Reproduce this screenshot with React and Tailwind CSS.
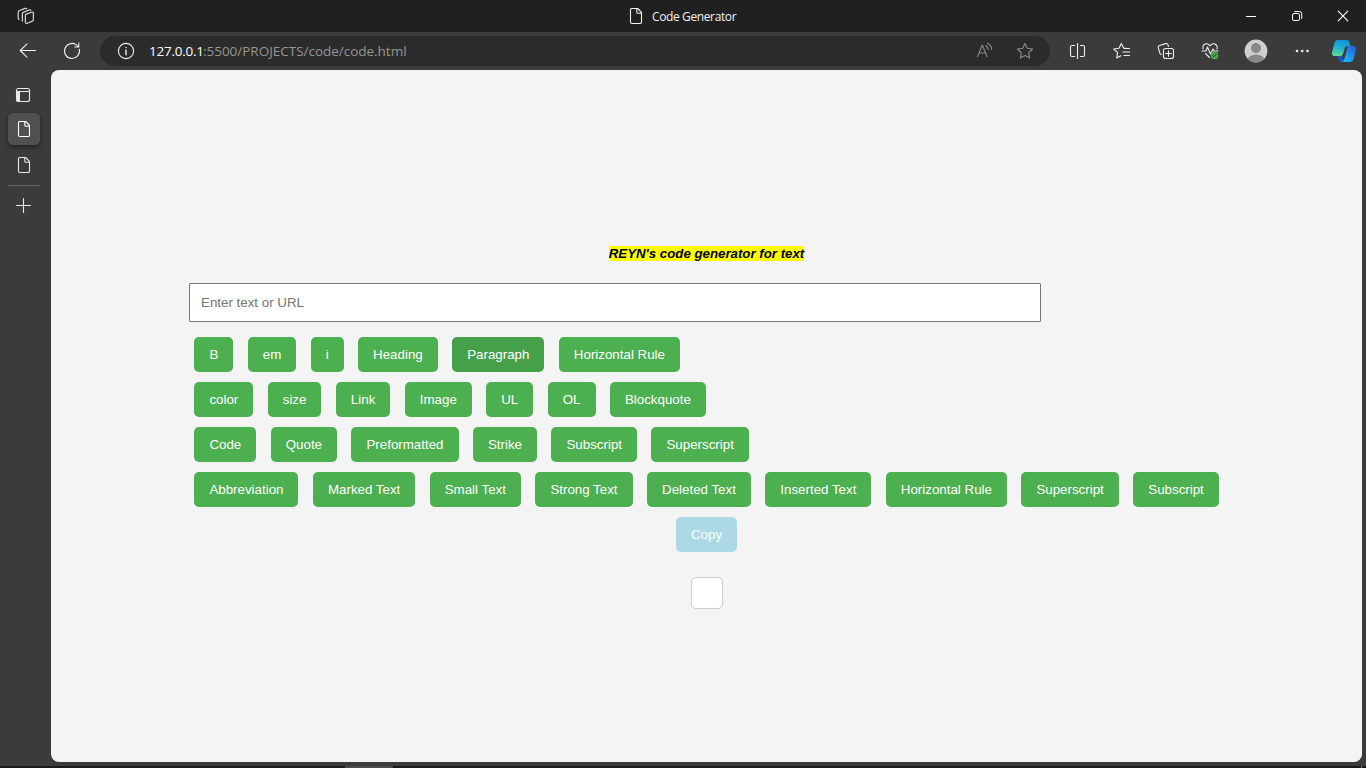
import React from "react";

function Icon({ size = 16, className = "", children, sw = 1.1 }) {
  return (
    <svg
      width={size}
      height={size}
      viewBox={`0 0 ${size} ${size}`}
      fill="none"
      stroke="currentColor"
      strokeWidth={sw}
      strokeLinecap="round"
      strokeLinejoin="round"
      className={`block shrink-0 ${className}`}
    >
      {children}
    </svg>
  );
}

function PageIcon({ className = "" }) {
  return (
    <Icon size={18} className={className} sw={1.1}>
      <path d="M4.5 1.5h6.2l3.8 4v9.600a1.400 1.400 0 0 1-1.400 1.400H4.900a1.400 1.400 0 0 1-1.400-1.400V2.500a1 1 0 0 1 1-1Z" />
      <path d="M9.800 1.700v3.600a1 1 0 0 0 1 1h3.600" />
    </Icon>
  );
}

function Workspaces() {
  return (
    <Icon size={18} className="ml-[17px] text-[#d5d5d5]" sw={1.2}>
      <path d="M8.700 7.400 14.500 5.300q1.900-.6 1.900 1v6.400q0 1-1 1.400l-5 2.100q-2 .7-2-1V8.400q0-.7.3-1Z" />
      <path d="M5.400 14.200V6.500q0-.8.8-1.100l6-2.400q1.300-.4 1.700.5" />
      <path d="M2 12.600q-.8-.5-.8-1.300V4.900q0-.9.8-1.200L8 1.400q1.200-.4 1.800.4" />
    </Icon>
  );
}

function TitleBar() {
  return (
    <header className="flex h-8 shrink-0 items-center bg-[#202020] text-[#f2f2f2]">
      <div className="flex w-[627px] items-center">
        <Workspaces />
      </div>
      <PageIcon />
      <span className="ml-[7px] mt-px w-[100px] whitespace-nowrap font-['Open_Sans',sans-serif] text-[12px] leading-4 tracking-[-0.38px]">
        Code Generator
      </span>
      <div className="ml-auto flex text-white">
        <span className="flex w-[46px] justify-center">
          <Icon size={12} sw={1}><path d="M1 6.500h10" strokeLinecap="butt" /></Icon>
        </span>
        <span className="flex w-[46px] justify-center">
          <Icon size={12} sw={1}>
            <rect x="1.500" y="3.500" width="7" height="7" rx="1.400" />
            <path d="M3.700 1.500h5a2 2 0 0 1 2 2v5" />
          </Icon>
        </span>
        <span className="flex w-[46px] justify-center">
          <Icon size={12} sw={1.1}><path d="m1.200 1.200 9.600 9.600M10.800 1.200l-9.600 9.600" /></Icon>
        </span>
      </div>
    </header>
  );
}

function Copilot() {
  return (
    <svg width="26" height="24" viewBox="0 0 26 24" className="block">
      <defs>
        <linearGradient id="cpA" x1=".6" y1="0" x2=".3" y2="1">
          <stop offset="0" stopColor="#1192dc" />
          <stop offset=".5" stopColor="#1fb2d0" />
          <stop offset="1" stopColor="#5fdc92" />
        </linearGradient>
        <linearGradient id="cpB" x1="1" y1="0" x2=".2" y2="1">
          <stop offset="0" stopColor="#2458dc" />
          <stop offset=".5" stopColor="#2389f0" />
          <stop offset="1" stopColor="#18c0fa" />
        </linearGradient>
      </defs>
      <path d="M7 17h4l3 6h-3.500c-1.700 0-2.500-1-3-2.600Z" fill="#1657c4" />
      <path d="M7 1h8.700c1.700 0 2.500 1 3 2.700L19.600 7H16.500c-1.500 0-2.300.8-2.700 2.200L12 15c-.5 1.500-1.400 2-3 2H3.500C1.200 17 .6 15.200 1.200 12.700L3.300 4.500C3.900 2.200 5.200 1 7 1Z" fill="url(#cpA)" />
      <path d="M19.300 23H10.500c1.500 0 2.300-.9 2.800-2.500L16.300 9c.4-1.400 1.200-2 2.700-2h3.300c2.400 0 3.100 1.800 2.500 4.300l-2.100 8.200c-.6 2.300-1.600 3.500-3.400 3.500Z" fill="url(#cpB)" />
    </svg>
  );
}

function Toolbar() {
  return (
    <div className="flex h-[38px] shrink-0 items-center bg-[#3b3b3b] text-[#efefef]">
      <div className="flex w-[100px] items-center pl-[19px]">
        <Icon size={18} sw={1.1}><path d="M1.300 8.500H16.500M8 1.800 1.300 8.500 8 15.200" /></Icon>
        <Icon size={18} sw={1.1} className="ml-[26px]">
          <path d="M16.300 7.200A7.500 7.500 0 1 1 13 2.600l2.500 2.200M15.800 1v4h-4" />
        </Icon>
      </div>
      <div className="flex h-[30px] w-[950px] items-center rounded-full bg-[#2b2b2b]">
        <Icon size={18} className="ml-[17px]">
          <circle cx="9" cy="9" r="7.600" />
          <path d="M9 8v4.800" strokeWidth="1.400" />
          <path d="M9 5.400v.1" strokeWidth="1.500" />
        </Icon>
        <div className="ml-[14px] flex flex-1 whitespace-nowrap font-['Open_Sans',sans-serif] text-[13.500px] leading-[18px]">
          <span className="w-[54px] tracking-[-0.25px] text-white">127.0.0.1</span>
          <span className="tracking-[-0.02px] text-[#969696]">:5500/PROJECTS/code/code.html</span>
        </div>
        <Icon size={18} className="text-[#8d8d8d]">
          <path d="M1.500 14.600 6.300 3l4.700 11.600M3 11h6.500" />
          <path d="M9.700 3.500q2.200 1.200 2.500 4M11.500 1.200q4 2 4.200 6.300" />
        </Icon>
        <Icon size={18} className="ml-[22px] mr-4 text-[#8d8d8d]">
          <path d="m9 1.500 2.300 4.800 5.200.7-3.800 3.700.9 5.200L9 13.400l-4.600 2.500.9-5.200L1.500 7l5.200-.7Z" />
        </Icon>
      </div>
      <div className="flex flex-1 items-center">
        <Icon size={18} className="ml-[18px]">
          <path d="M6.600 3.500H4a1.500 1.500 0 0 0-1.500 1.500v8a1.500 1.500 0 0 0 1.500 1.500h2.600M12.400 3.500h2.600a1.500 1.500 0 0 1 1.500 1.500v8a1.500 1.500 0 0 1-1.500 1.500h-2.600M9.500 1.500v15" />
        </Icon>
        <Icon size={18} className="ml-[26px]">
          <path d="M14 6.300 11.600 6 9.300 1.600 7 6.200l-5.200.8 3.800 3.700-.9 5.200 4.200-2.200" />
          <path d="M12 6.500h5.500M11 10h6.500M12 13.500h5.500" />
        </Icon>
        <Icon size={18} className="ml-[27px]">
          <rect x="6.500" y="6.500" width="10" height="10" rx="2" />
          <path d="M11.500 8.800v5.400M8.800 11.500h5.400M4.400 12.500q-1.200-.1-1.500-1.300L1.200 5.600q-.4-1.700 1.200-2.200l6.200-1.800q1.900-.5 2.400 1.200l.5 1.700" />
        </Icon>
        <Icon size={18} className="ml-[26px]" sw={1.100}>
          <path d="M2.100 7Q1.200 3 4.300 1.900 7 1.200 9 3.800q2-2.600 4.700-1.900Q17 3 16 7" />
          <path d="M1 9h4l1.500-4 3 7L12 7l1 2h4M4.500 11.500l4 4" />
          <circle cx="13.500" cy="13.500" r="3.800" fill="#4aa850" stroke="none" />
          <path d="m11.900 13.700 1 1 2.200-2.400" stroke="#173d1c" strokeWidth="1" />
        </Icon>
        <svg width="24" height="24" viewBox="0 0 24 24" className="ml-[25px] block">
          <defs><clipPath id="avatar"><circle cx="12" cy="12" r="11.400" /></clipPath></defs>
          <circle cx="12" cy="12" r="11.400" fill="#d2d0ce" />
          <g clipPath="url(#avatar)" fill="#8a8886">
            <circle cx="12" cy="9" r="5" />
            <ellipse cx="12" cy="21" rx="8.300" ry="5.500" />
          </g>
        </svg>
        <Icon size={18} className="ml-[25px]">
          <g fill="currentColor" stroke="none">
            <circle cx="4" cy="9" r="1.300" /><circle cx="9.200" cy="9" r="1.300" /><circle cx="14.500" cy="9" r="1.300" />
          </g>
        </Icon>
        <span className="ml-5"><Copilot /></span>
      </div>
    </div>
  );
}

function Sidebar() {
  return (
    <nav className="flex w-[51px] shrink-0 flex-col pl-2 text-[#e8e8e8]">
      <div className="flex h-[43px] w-8 justify-center pt-[17px]">
        <Icon size={16} className="-ml-[2px]">
          <rect x="1.500" y="1.500" width="13" height="13" rx="2" />
          <path d="M1.500 4.500h13" />
          <path d="M1.500 4.500h3.500v10H3q-1.500 0-1.500-1.500Z" fill="currentColor" stroke="none" />
        </Icon>
      </div>
      <div className="flex size-8 items-center justify-center rounded-[5px] bg-[#505050] text-white shadow-[0_2px_4px_rgba(0,0,0,0.45)]">
        <PageIcon />
      </div>
      <div className="mt-1 flex size-8 items-center justify-center">
        <PageIcon />
      </div>
      <div className="mt-1 h-px w-8 bg-[#636363]" />
      <div className="mt-[11px] flex w-8 justify-center">
        <Icon size={16} className="-ml-0.5"><path d="M8.500 1.500v14M1.500 8.500h14" /></Icon>
      </div>
    </nav>
  );
}

const rows = [
  ["B", "em", "i", "Heading", "Paragraph", "Horizontal Rule"],
  ["color", "size", "Link", "Image", "UL", "OL", "Blockquote"],
  ["Code", "Quote", "Preformatted", "Strike", "Subscript", "Superscript"],
  ["Abbreviation", "Marked Text", "Small Text", "Strong Text", "Deleted Text", "Inserted Text", "Horizontal Rule", "Superscript", "Subscript"],
];

function Button({ label, tone = "bg-[#4caf50]" }) {
  return (
    <button className={`h-[35px] shrink-0 whitespace-nowrap rounded-[5px] px-[15px] text-[13.3333px] leading-[15px] text-white ${tone}`}>
      {label}
    </button>
  );
}

function Generator() {
  return (
    <main className="flex flex-1 flex-col items-center rounded-lg bg-[#f4f4f4] pt-[176px] font-['Liberation_Sans',Arial,sans-serif]">
      <h5 className="text-[13.28px] font-bold italic leading-[15px] text-black">
        <mark className="bg-[#ffff00] text-black">REYN's code generator for text</mark>
      </h5>
      <div className="mt-[22px] flex w-[1035px] flex-col items-start">
        <input
          placeholder="Enter text or URL"
          className="h-[39px] w-[852px] rounded-[1px] border border-[#767676] bg-white px-[11px] text-[13.3333px] text-black placeholder:text-[#757575]"
        />
        <div className="mt-[15px] flex flex-col gap-[10px] pl-[5.4px]">
          {rows.map((row, r) => (
            <div key={r} className="flex gap-[14.45px]">
              {row.map((label) => (
                <Button key={label} label={label} tone={label === "Paragraph" ? "bg-[#45a049]" : "bg-[#4caf50]"} />
              ))}
            </div>
          ))}
        </div>
      </div>
      <div className="mt-[10px] flex">
        <Button label="Copy" tone="bg-[#add8e6]" />
      </div>
      <div className="mt-[25px] size-8 rounded-[5px] border border-[#cccccc] bg-white" />
    </main>
  );
}

export default function App() {
  return (
    <div className="flex h-[768px] w-[1366px] flex-col overflow-hidden bg-[#3b3b3b]">
      <TitleBar />
      <Toolbar />
      <div className="flex h-[692px] shrink-0 pr-1">
        <Sidebar />
        <Generator />
      </div>
      <div className="mt-1 flex h-0.5 shrink-0 bg-[#1c1c1c] pl-[345px]">
        <div className="h-0.5 w-12 bg-[#4c4a4a]" />
        <div className="ml-auto mr-1 h-0.5 w-px bg-[#707070]" />
      </div>
    </div>
  );
}
